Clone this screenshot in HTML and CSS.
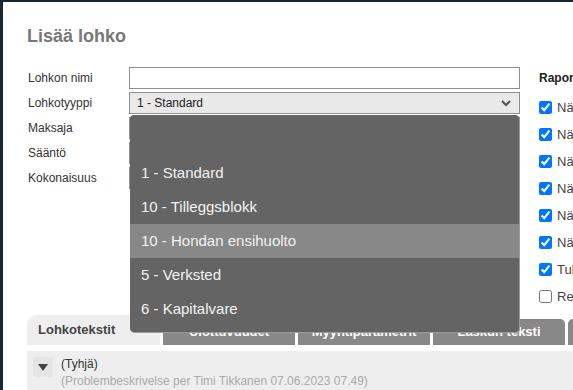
FILE: index.html
```html
<!DOCTYPE html>
<html>
<head>
  <meta charset="utf-8">
  <title>Lisää lohko</title>
  <link rel="stylesheet" href="styles.css">
</head>
<body>
  <div class="dialog">
    <h1 class="title">Lisää lohko</h1>
    <div class="main">
      <div class="form">
        <label class="label">Lohkon nimi</label>
        <input class="field" type="text">
        <label class="label">Lohkotyyppi</label>
        <div class="field select">
          <span>1 - Standard</span>
          <svg class="chevron" width="10" height="7" viewBox="0 0 10 7"><polyline points="1,1 5,5 9,1" fill="none" stroke="#555" stroke-width="2.2"/></svg>
        </div>
        <label class="label">Maksaja</label>
        <input class="field" type="text">
        <label class="label">Sääntö</label>
        <input class="field" type="text">
        <label class="label">Kokonaisuus</label>
        <input class="field" type="text">
      </div>
      <div class="side">
        <div class="side-title">Raportointi</div>
        <label class="check"><input type="checkbox" checked> Näytä hinnat</label>
        <label class="check"><input type="checkbox" checked> Näytä määrät</label>
        <label class="check"><input type="checkbox" checked> Näytä alennus</label>
        <label class="check"><input type="checkbox" checked> Näytä summa</label>
        <label class="check"><input type="checkbox" checked> Näytä tunnit</label>
        <label class="check"><input type="checkbox" checked> Näytä rivit</label>
        <label class="check"><input type="checkbox" checked> Tulosta lohko</label>
        <label class="check"><input type="checkbox"> Reklamaatio</label>
      </div>
    </div>

    <div class="tabs">
      <div class="tab active">Lohkotekstit</div>
      <div class="tab">Ulottuvuudet</div>
      <div class="tab">Myyntiparametrit</div>
      <div class="tab">Laskun teksti</div>
      <div class="tab">Muut</div>
    </div>
    <div class="panel">
      <div class="toggle">
        <svg width="10" height="7" viewBox="0 0 10 7"><polygon points="0,0 10,0 5,7" fill="#444"/></svg>
      </div>
      <div class="entry">
        <div>(Tyhjä)</div>
        <div class="meta">(Problembeskrivelse per Timi Tikkanen 07.06.2023 07.49)</div>
      </div>
    </div>

    <ul class="dropdown">
      <li>&nbsp;</li>
      <li>1 - Standard</li>
      <li>10 - Tilleggsblokk</li>
      <li class="hover">10 - Hondan ensihuolto</li>
      <li>5 - Verksted</li>
      <li>6 - Kapitalvare</li>
    </ul>
  </div>
</body>
</html>
```

FILE: styles.css
```css
html,
body {
  margin: 0;
  height: 100%;
  overflow: hidden;
}

body {
  background: #1b2433;
  font-family: "Liberation Sans", Arial, sans-serif;
  color: #333;
}

.dialog {
  position: relative;
  margin: 2px 0 0 3px;
  height: 100%;
  background: #fff;
  padding: 0 0 0 24px;
  width: 700px;
}

.title {
  margin: 0;
  padding-top: 24px;
  height: 41px;
  font-size: 18px;
  font-weight: bold;
  color: #777;
  line-height: 20px;
}

.main {
  display: flex;
  align-items: flex-start;
  gap: 19px;
}

.form {
  display: grid;
  grid-template-columns: 102px 391px;
  row-gap: 3px;
  align-items: center;
}

.label {
  font-size: 12px;
  color: #333;
  padding-left: 1px;
}

.field {
  box-sizing: border-box;
  height: 22px;
  margin: 0;
  border: 1px solid #8f8f8f;
  background: #fff;
  font: inherit;
}

.select {
  display: flex;
  align-items: center;
  justify-content: space-between;
  padding: 0 8px 0 7px;
  background: #e9e9e9;
  font-size: 12px;
  color: #222;
}

.side {
  display: flex;
  flex-direction: column;
  white-space: nowrap;
  padding-top: 1px;
}

.side-title {
  font-size: 12px;
  font-weight: bold;
  color: #222;
  height: 22px;
  line-height: 20px;
  margin-bottom: 4px;
}

.check {
  display: flex;
  align-items: center;
  gap: 5px;
  height: 27px;
  font-size: 13px;
  color: #444;
}

.check input {
  margin: 0;
  width: 13px;
  height: 13px;
}

.tabs {
  display: flex;
  align-items: flex-end;
  gap: 3px;
  margin-top: 5px;
  height: 30px;
}

.tab {
  width: 132px;
  height: 26px;
  line-height: 26px;
  background: #888;
  color: #fff;
  font-size: 13px;
  font-weight: bold;
  text-align: center;
  border-radius: 5px 5px 0 0;
  flex: none;
}

.tab.active {
  height: 30px;
  line-height: 30px;
  background: #eee;
  color: #444;
  text-align: left;
  padding-left: 11px;
  width: 122px;
  border-radius: 9px 0 0 0;
}

.panel {
  display: flex;
  gap: 8px;
  margin-top: 6px;
  padding: 5px 6px;
  background: #eee;
  height: 60px;
}

.toggle {
  width: 20px;
  height: 20px;
  background: #e5e5e5;
  border-radius: 2px;
  display: flex;
  align-items: center;
  justify-content: center;
  margin-top: 1px;
}

.entry {
  font-size: 12px;
  line-height: 17px;
  color: #333;
}

.meta {
  color: #aaa;
}

.dropdown {
  position: absolute;
  left: 127px;
  top: 113px;
  width: 389px;
  margin: 0;
  padding: 7px 0 6px;
  list-style: none;
  background: #646464;
  border-radius: 4px;
  box-shadow: 1px 1px 0 #9a9a9a;
}

.dropdown li {
  height: 34px;
  line-height: 34px;
  padding-left: 11px;
  font-size: 15px;
  color: #f2f2f2;
}

.dropdown li.hover {
  background: #888;
}
```
